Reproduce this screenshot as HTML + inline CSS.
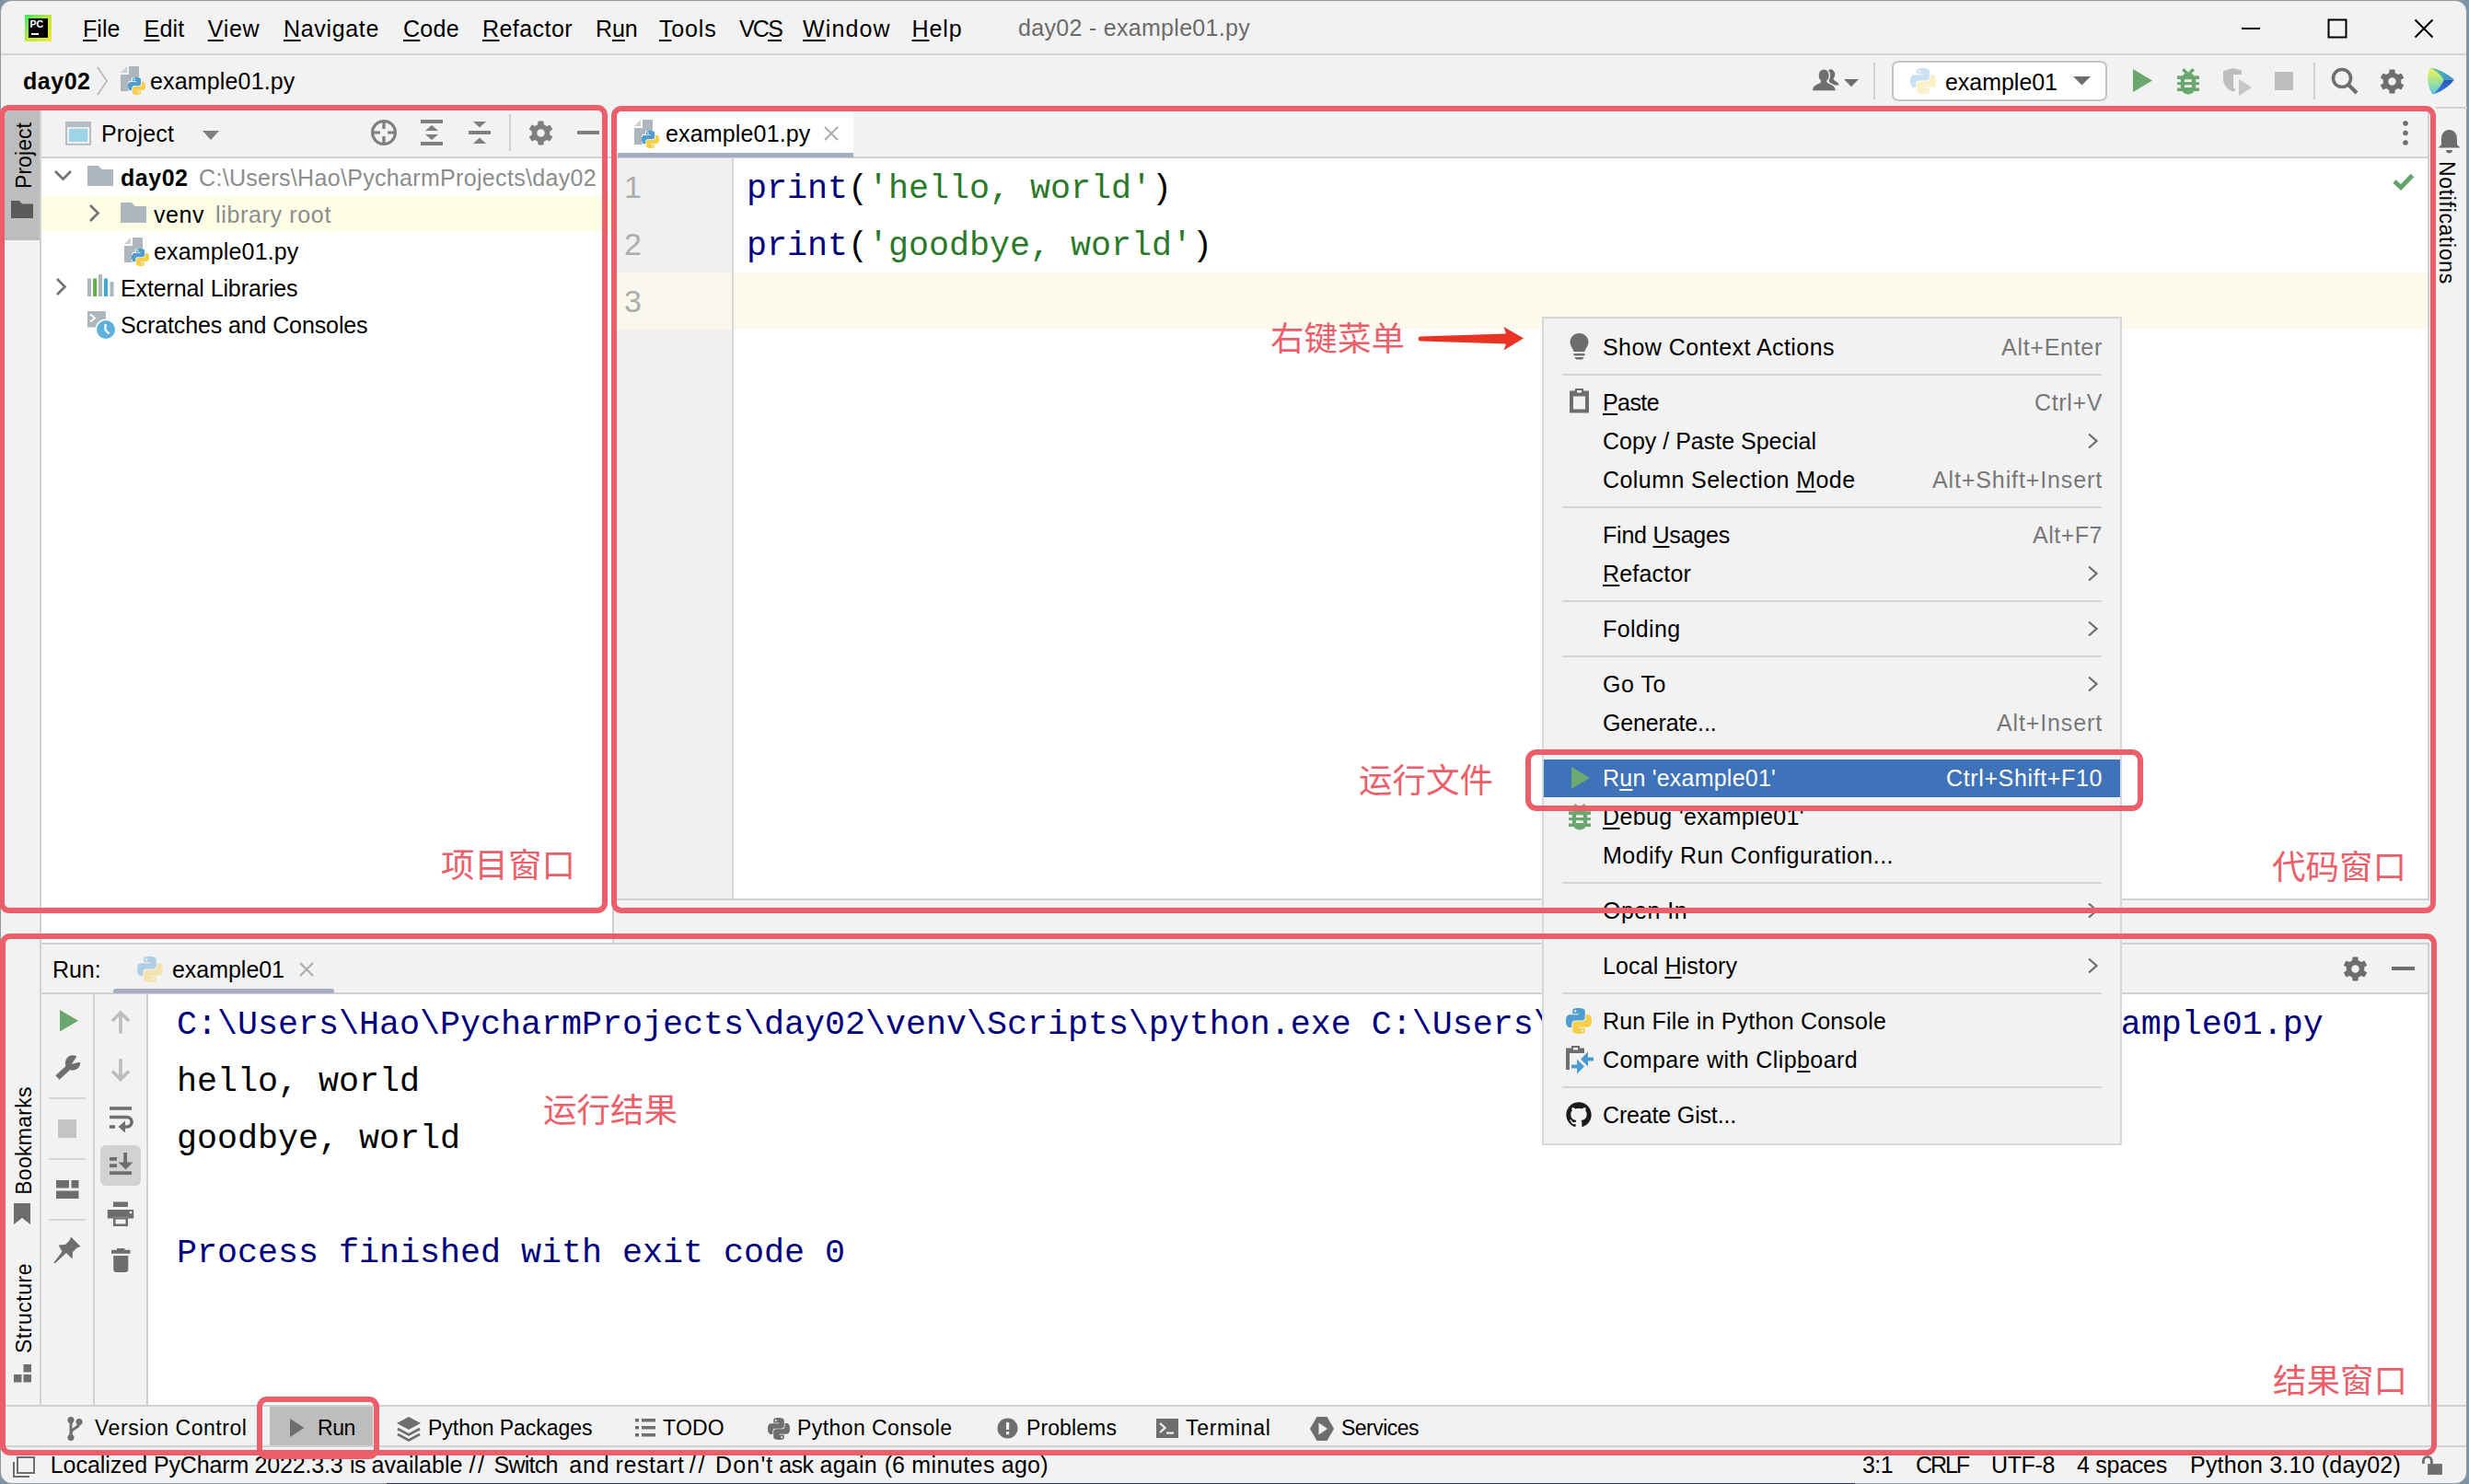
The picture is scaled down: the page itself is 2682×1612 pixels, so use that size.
<!DOCTYPE html>
<html lang="en"><head><meta charset="utf-8"><title>day02 - example01.py</title>
<style>
html,body{margin:0;padding:0;}
body{width:2682px;height:1612px;overflow:hidden;background:#7b93a7;position:relative;}
#app{position:absolute;left:0;top:0;width:2682px;height:1612px;overflow:hidden;}
#app div,#app span,#app svg{position:absolute;}
#app span{white-space:pre;}
#app u{text-decoration:underline;text-decoration-thickness:2px;text-underline-offset:3px;}
</style></head>
<body><div id="app">
<div style="left:1px;top:1px;width:2678.300px;height:1609.6px;background:#f2f2f2;border-radius:12px;box-shadow:0 0 0 1.5px #8c99a3;"></div>
<div style="left:1px;top:58px;width:2678px;height:2px;background:#d4d4d4;"></div>
<div style="left:2646px;top:116px;width:34px;height:2px;background:#d1d1d1;"></div>
<div style="left:27px;top:16px;width:29px;height:29px;background:linear-gradient(135deg,#3bea62 0%,#c9e637 55%,#f1eb42 100%);"></div>
<div style="left:31px;top:20px;width:21px;height:21px;background:#000;"></div>
<span style="left:32.500px;top:21px;font:700 10.500px/10.500px 'Liberation Sans', sans-serif;color:#fff;">PC</span>
<div style="left:33.5px;top:36px;width:8px;height:2px;background:#fff;"></div>
<span id="t1" style="top:18.8px;font:400 25px/25px 'Liberation Sans', sans-serif;color:#000;left:90px;letter-spacing:0.026px;"><u>F</u>ile</span>
<span id="t2" style="top:18.8px;font:400 25px/25px 'Liberation Sans', sans-serif;color:#000;left:156.5px;letter-spacing:0.202px;"><u>E</u>dit</span>
<span id="t3" style="top:18.8px;font:400 25px/25px 'Liberation Sans', sans-serif;color:#000;left:225.8px;letter-spacing:0.712px;"><u>V</u>iew</span>
<span id="t4" style="top:18.8px;font:400 25px/25px 'Liberation Sans', sans-serif;color:#000;left:308px;letter-spacing:0.664px;"><u>N</u>avigate</span>
<span id="t5" style="top:18.8px;font:400 25px/25px 'Liberation Sans', sans-serif;color:#000;left:438px;letter-spacing:0.305px;"><u>C</u>ode</span>
<span id="t6" style="top:18.8px;font:400 25px/25px 'Liberation Sans', sans-serif;color:#000;left:524px;letter-spacing:0.438px;"><u>R</u>efactor</span>
<span id="t7" style="top:18.8px;font:400 25px/25px 'Liberation Sans', sans-serif;color:#000;left:647px;letter-spacing:-0.092px;">R<u>u</u>n</span>
<span id="t8" style="top:18.8px;font:400 25px/25px 'Liberation Sans', sans-serif;color:#000;left:716px;letter-spacing:0.845px;"><u>T</u>ools</span>
<span id="t9" style="top:18.8px;font:400 25px/25px 'Liberation Sans', sans-serif;color:#000;left:803px;letter-spacing:-1.807px;">VC<u>S</u></span>
<span id="t10" style="top:18.8px;font:400 25px/25px 'Liberation Sans', sans-serif;color:#000;left:872px;letter-spacing:1.127px;"><u>W</u>indow</span>
<span id="t11" style="top:18.8px;font:400 25px/25px 'Liberation Sans', sans-serif;color:#000;left:990.4px;letter-spacing:0.966px;"><u>H</u>elp</span>
<span id="t12" style="top:18.3px;font:400 25px/25px 'Liberation Sans', sans-serif;color:#6b6b6b;left:1106px;letter-spacing:0.301px;">day02 - example01.py</span>
<svg style="left:2430px;top:20px;" width="30" height="22" viewBox="0 0 30 22"><rect x="5" y="10" width="20" height="2" fill="#000"/></svg>
<svg style="left:2526px;top:18px;" width="26" height="26" viewBox="0 0 26 26"><rect x="3.500" y="3.500" width="19" height="19" fill="none" stroke="#000" stroke-width="2"/></svg>
<svg style="left:2620px;top:18px;" width="26" height="26" viewBox="0 0 26 26"><path d="M3.500 3.500L22.500 22.500M22.500 3.500L3.500 22.500" stroke="#000" stroke-width="2" fill="none"/></svg>
<span id="t13" style="top:75.8px;font:700 25px/25px 'Liberation Sans', sans-serif;color:#000;left:25px;letter-spacing:0.522px;">day02</span>
<svg style="left:104px;top:72px;" width="16" height="32" viewBox="0 0 16 32"><path d="M2 1L12 16L2 31" fill="none" stroke="#b4b4b4" stroke-width="1.600"/></svg>
<svg style="left:131px;top:72px;" width="27" height="31" viewBox="0 0 27 31"><path fill="#aeb6bd" d="M9 0H20V16H13V27H0V9H9Z"/><path fill="#c9cfd4" d="M7 0V7H0Z"/></svg>
<svg style="left:139px;top:83.5px;" width="19" height="19" viewBox="0 0 24 24"><path fill="#fff" stroke="#fff" stroke-width="2.600" d="M14.25.18l.9.2.73.26.59.3.45.32.34.34.25.34.16.33.1.3.04.26.02.2-.01.13V8.5l-.05.63-.13.55-.21.46-.26.38-.3.31-.33.25-.35.19-.35.14-.33.1-.3.07-.26.04-.21.02H8.77l-.69.05-.59.14-.5.22-.41.27-.33.32-.27.35-.2.36-.15.37-.1.35-.07.32-.04.27-.02.21v3.06H3.17l-.21-.03-.28-.07-.32-.12-.35-.18-.36-.26-.36-.36-.35-.46-.32-.59-.28-.73-.21-.88-.14-1.05-.05-1.23.06-1.22.16-1.04.24-.87.32-.71.36-.57.4-.44.42-.33.42-.24.4-.16.36-.1.32-.05.24-.01h.16l.06.01h8.16v-.83H6.18l-.01-2.75-.02-.37.05-.34.11-.31.17-.28.25-.26.31-.23.38-.2.44-.18.51-.15.58-.12.64-.1.71-.06.77-.04.84-.02 1.27.05zM7.95 2.16l-.23.33-.08.41.08.41.23.34.33.22.41.09.41-.09.33-.22.23-.34.08-.41-.08-.41-.23-.33-.33-.22-.41-.09-.41.09z"/></svg>
<svg style="left:139px;top:83.5px;" width="19" height="19" viewBox="0 0 24 24"><g opacity="1"><path fill="#4f9dd0" d="M14.25.18l.9.2.73.26.59.3.45.32.34.34.25.34.16.33.1.3.04.26.02.2-.01.13V8.5l-.05.63-.13.55-.21.46-.26.38-.3.31-.33.25-.35.19-.35.14-.33.1-.3.07-.26.04-.21.02H8.77l-.69.05-.59.14-.5.22-.41.27-.33.32-.27.35-.2.36-.15.37-.1.35-.07.32-.04.27-.02.21v3.06H3.17l-.21-.03-.28-.07-.32-.12-.35-.18-.36-.26-.36-.36-.35-.46-.32-.59-.28-.73-.21-.88-.14-1.05-.05-1.23.06-1.22.16-1.04.24-.87.32-.71.36-.57.4-.44.42-.33.42-.24.4-.16.36-.1.32-.05.24-.01h.16l.06.01h8.16v-.83H6.18l-.01-2.75-.02-.37.05-.34.11-.31.17-.28.25-.26.31-.23.38-.2.44-.18.51-.15.58-.12.64-.1.71-.06.77-.04.84-.02 1.27.05zM7.95 2.16l-.23.33-.08.41.08.41.23.34.33.22.41.09.41-.09.33-.22.23-.34.08-.41-.08-.41-.23-.33-.33-.22-.41-.09-.41.09z"/><path fill="#f6cf4b" d="M21.04 6.11l.28.06.32.12.35.18.36.27.36.35.35.47.32.59.28.73.21.88.14 1.04.05 1.23-.06 1.23-.16 1.04-.24.86-.32.71-.36.57-.4.45-.42.33-.42.24-.4.16-.36.09-.32.05-.24.02-.16-.01h-8.22v.82h5.84l.01 2.76.02.36-.05.34-.11.31-.17.29-.25.25-.31.24-.38.2-.44.17-.51.15-.58.13-.64.09-.71.07-.77.04-.84.01-1.27-.04-1.07-.14-.9-.2-.73-.25-.59-.3-.45-.33-.34-.34-.25-.34-.16-.33-.1-.3-.04-.25-.02-.2.01-.13v-5.34l.05-.64.13-.54.21-.46.26-.38.3-.32.33-.24.35-.2.35-.14.33-.1.3-.06.26-.04.21-.02.13-.01h5.84l.69-.05.59-.14.5-.21.41-.28.33-.32.27-.35.2-.36.15-.36.1-.35.07-.32.04-.28.02-.21V6.07h2.09l.14.01zM14.57 20.36l-.23.33-.08.41.08.41.23.33.33.23.41.08.41-.08.33-.23.23-.33.08-.41-.08-.41-.23-.33-.33-.23-.41-.08-.41.08z"/></g></svg>
<span id="t14" style="top:75.8px;font:400 25px/25px 'Liberation Sans', sans-serif;color:#000;left:163px;letter-spacing:0.154px;">example01.py</span>
<svg style="left:1968px;top:70px;" width="31" height="30" viewBox="0 0 31 30"><g fill="#6e6e6e"><ellipse cx="20.600" cy="11" rx="4.600" ry="5.800"/><path d="M18 15L23.500 15.500C24 18.500 29.500 18.500 29.500 22.600H20Z"/></g><g fill="#f2f2f2" stroke="#f2f2f2" stroke-width="3"><ellipse cx="13.200" cy="12" rx="5.500" ry="6.600"/><path d="M1 28.600C1 22.500 6 22 9.800 19.800L10.400 16H16L16.600 19.800C20.500 22 25.700 22.500 25.700 28.600Z"/></g><g fill="#6e6e6e"><ellipse cx="13.200" cy="12" rx="5.500" ry="6.600"/><path d="M1 28.600C1 22.500 6 22 9.800 19.800L10.400 16H16L16.600 19.800C20.500 22 25.700 22.500 25.700 28.600Z"/></g><rect x="0" y="28.600" width="31" height="2" fill="#f2f2f2"/></svg>
<svg style="left:2003.0px;top:85.9px;" width="16" height="8.2" viewBox="0 0 16 8.2"><path fill="#6e6e6e" d="M0 0H16L8.0 8.2Z"/></svg>
<div style="left:2035px;top:68px;width:2px;height:40px;background:#d0d0d0;"></div>
<div style="left:2055px;top:65.800px;width:230px;height:40.100px;background:#fff;border:2px solid #c4c4c4;border-radius:7px;"></div>
<svg style="left:2075px;top:74px;" width="28" height="28" viewBox="0 0 24 24"><g opacity="0.3"><path fill="#4f9dd0" d="M14.25.18l.9.2.73.26.59.3.45.32.34.34.25.34.16.33.1.3.04.26.02.2-.01.13V8.5l-.05.63-.13.55-.21.46-.26.38-.3.31-.33.25-.35.19-.35.14-.33.1-.3.07-.26.04-.21.02H8.77l-.69.05-.59.14-.5.22-.41.27-.33.32-.27.35-.2.36-.15.37-.1.35-.07.32-.04.27-.02.21v3.06H3.17l-.21-.03-.28-.07-.32-.12-.35-.18-.36-.26-.36-.36-.35-.46-.32-.59-.28-.73-.21-.88-.14-1.05-.05-1.23.06-1.22.16-1.04.24-.87.32-.71.36-.57.4-.44.42-.33.42-.24.4-.16.36-.1.32-.05.24-.01h.16l.06.01h8.16v-.83H6.18l-.01-2.75-.02-.37.05-.34.11-.31.17-.28.25-.26.31-.23.38-.2.44-.18.51-.15.58-.12.64-.1.71-.06.77-.04.84-.02 1.27.05zM7.95 2.16l-.23.33-.08.41.08.41.23.34.33.22.41.09.41-.09.33-.22.23-.34.08-.41-.08-.41-.23-.33-.33-.22-.41-.09-.41.09z"/><path fill="#f6cf4b" d="M21.04 6.11l.28.06.32.12.35.18.36.27.36.35.35.47.32.59.28.73.21.88.14 1.04.05 1.23-.06 1.23-.16 1.04-.24.86-.32.71-.36.57-.4.45-.42.33-.42.24-.4.16-.36.09-.32.05-.24.02-.16-.01h-8.22v.82h5.84l.01 2.76.02.36-.05.34-.11.31-.17.29-.25.25-.31.24-.38.2-.44.17-.51.15-.58.13-.64.09-.71.07-.77.04-.84.01-1.27-.04-1.07-.14-.9-.2-.73-.25-.59-.3-.45-.33-.34-.34-.25-.34-.16-.33-.1-.3-.04-.25-.02-.2.01-.13v-5.34l.05-.64.13-.54.21-.46.26-.38.3-.32.33-.24.35-.2.35-.14.33-.1.3-.06.26-.04.21-.02.13-.01h5.84l.69-.05.59-.14.5-.21.41-.28.33-.32.27-.35.2-.36.15-.36.1-.35.07-.32.04-.28.02-.21V6.07h2.09l.14.01zM14.57 20.36l-.23.33-.08.41.08.41.23.33.33.23.41.08.41-.08.33-.23.23-.33.08-.41-.08-.41-.23-.33-.33-.23-.41-.08-.41.08z"/></g></svg>
<span id="t15" style="top:76.8px;font:400 25px/25px 'Liberation Sans', sans-serif;color:#000;left:2113px;letter-spacing:-0.035px;">example01</span>
<svg style="left:2251.5px;top:83.25px;" width="19" height="9.5" viewBox="0 0 19 9.5"><path fill="#6e6e6e" d="M0 0H19L9.5 9.5Z"/></svg>
<svg style="left:2317px;top:75px;" width="21" height="25" viewBox="0 0 21 25"><path fill="#6aa76e" d="M0 0L21 12.5L0 25Z"/></svg>
<svg style="left:2365.0px;top:73.8px;" width="24.0" height="29.0" viewBox="0 0 24 29"><g fill="#6aa76e"><path d="M3.8 14C3.8 8 7.500 5.500 12 5.500S20.200 8 20.200 14V19.500C20.200 25 16.500 28.400 12 28.400S3.800 25 3.800 19.500Z"/>
<path d="M6.200 1.200L11.500 6.500M17.800 1.200L12.500 6.500" stroke="#6aa76e" stroke-width="3.400" fill="none"/>
<rect x="0" y="8.300" width="5" height="3.800"/><rect x="19" y="8.300" width="5" height="3.800"/>
<rect x="0" y="15.200" width="5" height="2.900"/><rect x="19" y="15.200" width="5" height="2.900"/>
<rect x="0" y="21.500" width="5" height="3.500"/><rect x="19" y="21.500" width="5" height="3.500"/></g>
<rect x="8" y="12.300" width="7.800" height="2.700" fill="#f2f2f2"/><rect x="8" y="18.300" width="7.800" height="2.700" fill="#f2f2f2"/></svg>
<svg style="left:2413px;top:73px;" width="34" height="32" viewBox="0 0 34 32"><path fill="#bdbdbd" d="M2 4L13 1L22 3.500V8H13V22.500L16 24.500L12.500 26.500C6 24 2 19 2 12Z"/><path fill="#c6c6c6" d="M19 13L33 22L19 31Z"/></svg>
<div style="left:2471px;top:78px;width:20px;height:20px;background:#bdbdbd;"></div>
<div style="left:2513px;top:68px;width:2px;height:40px;background:#d0d0d0;"></div>
<svg style="left:2531px;top:72px;" width="32" height="32" viewBox="0 0 32 32"><circle cx="13" cy="13" r="9.500" fill="none" stroke="#6e6e6e" stroke-width="3.600"/><path d="M20 20L29 29" stroke="#6e6e6e" stroke-width="4" /></svg>
<svg style="left:2584.0px;top:73.5px;" width="29" height="29" viewBox="0 0 29 29"><path fill="#6e6e6e" fill-rule="evenodd" stroke="#6e6e6e" stroke-width="1.5" stroke-linejoin="round" d="M11.99 5.60 L12.18 2.22 L16.82 2.22 L17.01 5.60 L20.95 7.87 L23.98 6.35 L26.30 10.37 L23.47 12.22 L23.47 16.78 L26.30 18.63 L23.98 22.65 L20.95 21.13 L17.01 23.40 L16.82 26.78 L12.18 26.78 L11.99 23.40 L8.05 21.13 L5.02 22.65 L2.70 18.63 L5.53 16.78 L5.53 12.22 L2.70 10.37 L5.02 6.35 L8.05 7.87Z M19.50 14.50 A5.0 5.0 0 1 0 9.50 14.50 A5.0 5.0 0 1 0 19.50 14.50Z"/></svg>
<div style="left:2636.500px;top:73.300px;width:30px;height:30px;background:linear-gradient(180deg,#f6f25a 5%,#a6e38f 50%,#5cc8e2 95%);clip-path:polygon(10.0% 2.7%,4.0% 20.0%,2.0% 40.0%,4.0% 60.0%,10.0% 80.0%,18.7% 97.3%,31.7% 86.7%,45.0% 71.7%,55.0% 56.7%,60.0% 45.3%,50.0% 30.0%,35.0% 16.0%,21.7% 7.3%);"></div>
<div style="left:2636.500px;top:73.300px;width:30px;height:30px;background:linear-gradient(100deg,#4fd37c 5%,#45a8c0 55%,#3c86e0 100%);clip-path:polygon(10.0% 2.7%,30.0% 4.7%,50.0% 12.0%,70.0% 23.3%,86.7% 35.0%,98.0% 44.0%,60.0% 45.3%,50.0% 30.0%,35.0% 16.0%,21.7% 7.3%);"></div>
<div style="left:2636.500px;top:73.300px;width:30px;height:30px;background:linear-gradient(200deg,#2546a8 20%,#2f6fd0 70%,#3b95e0 100%);clip-path:polygon(98.0% 44.0%,86.7% 58.3%,70.0% 72.7%,50.0% 85.3%,33.3% 93.3%,18.7% 97.3%,31.7% 86.7%,45.0% 71.7%,55.0% 56.7%,60.0% 45.3%);"></div>
<div style="left:5px;top:120px;width:38px;height:141px;background:#bdbdbd;"></div>
<div style="left:43px;top:120px;width:2px;height:904px;background:#d1d1d1;"></div>
<span id="t16" style="left:25.5px;top:168.5px;font:400 23px/23px 'Liberation Sans', sans-serif;color:#000;transform:translate(-50%,-50%) rotate(-90deg);letter-spacing:0.058px;">Project</span>
<svg style="left:12px;top:218px;" width="24" height="19" viewBox="0 0 24 19"><path fill="#5a5a5a" d="M0 0H9L12 3.500H24V19H0Z"/></svg>
<div style="left:45px;top:120px;width:621px;height:50px;background:#f2f2f2;"></div>
<div style="left:45px;top:170px;width:621px;height:2px;background:#d1d1d1;"></div>
<div style="left:45px;top:172px;width:621px;height:852px;background:#fff;"></div>
<div style="left:665px;top:172px;width:2px;height:852px;background:#d1d1d1;"></div>
<svg style="left:71px;top:132px;" width="28" height="26" viewBox="0 0 28 26"><rect width="28" height="25.800" fill="#b5bcc3"/><rect x="2" y="6.200" width="24" height="17.600" fill="#f6f6f6"/><rect x="3.700" y="7.800" width="20.600" height="14.200" fill="#9fd3e8"/></svg>
<span id="t17" style="top:133.3px;font:400 25px/25px 'Liberation Sans', sans-serif;color:#000;left:110px;letter-spacing:0.170px;">Project</span>
<svg style="left:220.0px;top:142.0px;" width="18" height="10" viewBox="0 0 18 10"><path fill="#7f7f7f" d="M0 0H18L9.0 10Z"/></svg>
<svg style="left:401px;top:128px;" width="32" height="32" viewBox="0 0 32 32"><g fill="none" stroke="#7f7f7f" stroke-width="3.200"><circle cx="16" cy="16" r="12.400"/><path d="M16 4V12M16 20V28M4 16H12M20 16H28"/></g></svg>
<svg style="left:456px;top:129px;" width="26" height="30" viewBox="0 0 26 30"><g fill="#7f7f7f"><rect x="1" y="1" width="24" height="4"/><rect x="1" y="25" width="24" height="4"/><path d="M6 13H20L13 7Z"/><path d="M6 17H20L13 23Z"/></g></svg>
<svg style="left:508px;top:129px;" width="26" height="30" viewBox="0 0 26 30"><g fill="#7f7f7f"><rect x="1" y="13" width="24" height="4"/><path d="M6 3H20L13 9.500Z"/><path d="M6 27H20L13 20.500Z"/></g></svg>
<div style="left:553px;top:124px;width:2px;height:40px;background:#d0d0d0;"></div>
<svg style="left:572.5px;top:129.5px;" width="29" height="29" viewBox="0 0 29 29"><path fill="#7f7f7f" fill-rule="evenodd" stroke="#7f7f7f" stroke-width="1.5" stroke-linejoin="round" d="M11.99 5.60 L12.18 2.22 L16.82 2.22 L17.01 5.60 L20.95 7.87 L23.98 6.35 L26.30 10.37 L23.47 12.22 L23.47 16.78 L26.30 18.63 L23.98 22.65 L20.95 21.13 L17.01 23.40 L16.82 26.78 L12.18 26.78 L11.99 23.40 L8.05 21.13 L5.02 22.65 L2.70 18.63 L5.53 16.78 L5.53 12.22 L2.70 10.37 L5.02 6.35 L8.05 7.87Z M19.50 14.50 A5.0 5.0 0 1 0 9.50 14.50 A5.0 5.0 0 1 0 19.50 14.50Z"/></svg>
<div style="left:627px;top:142px;width:24px;height:4px;background:#7f7f7f;"></div>
<div style="left:45px;top:212px;width:620px;height:40px;background:#fefee6;"></div>
<svg style="left:57.5px;top:183.75px;" width="21" height="13.5" viewBox="0 0 21 13.5"><path fill="none" stroke="#737373" stroke-width="2.7" d="M2 2L10.5 10.5L19 2"/></svg>
<svg style="left:95px;top:180px;" width="28" height="22" viewBox="0 0 28 22"><path fill="#afb7be" d="M0 0H11.8L15.8 4H28V22H0Z"/></svg>
<span id="t18" style="top:180.8px;font:700 25px/25px 'Liberation Sans', sans-serif;color:#000;left:131px;letter-spacing:0.522px;">day02</span>
<span id="t19" style="top:180.8px;font:400 25px/25px 'Liberation Sans', sans-serif;color:#8c8c8c;left:216px;letter-spacing:0.324px;">C:\Users\Hao\PycharmProjects\day02</span>
<svg style="left:96.25px;top:220.5px;" width="13.5" height="21" viewBox="0 0 13.5 21"><path fill="none" stroke="#737373" stroke-width="2.7" d="M2 2L10.5 10.5L2 19"/></svg>
<svg style="left:131px;top:220px;" width="28" height="22" viewBox="0 0 28 22"><path fill="#afb7be" d="M0 0H11.8L15.8 4H28V22H0Z"/></svg>
<span id="t20" style="top:220.8px;font:400 25px/25px 'Liberation Sans', sans-serif;color:#000;left:167px;letter-spacing:0.547px;">venv</span>
<span id="t21" style="top:220.8px;font:400 25px/25px 'Liberation Sans', sans-serif;color:#8c8c8c;left:234px;letter-spacing:0.659px;">library root</span>
<svg style="left:135px;top:258px;" width="27" height="31" viewBox="0 0 27 31"><path fill="#aeb6bd" d="M9 0H20V16H13V27H0V9H9Z"/><path fill="#c9cfd4" d="M7 0V7H0Z"/></svg>
<svg style="left:143px;top:269.5px;" width="19" height="19" viewBox="0 0 24 24"><path fill="#fff" stroke="#fff" stroke-width="2.600" d="M14.25.18l.9.2.73.26.59.3.45.32.34.34.25.34.16.33.1.3.04.26.02.2-.01.13V8.5l-.05.63-.13.55-.21.46-.26.38-.3.31-.33.25-.35.19-.35.14-.33.1-.3.07-.26.04-.21.02H8.77l-.69.05-.59.14-.5.22-.41.27-.33.32-.27.35-.2.36-.15.37-.1.35-.07.32-.04.27-.02.21v3.06H3.17l-.21-.03-.28-.07-.32-.12-.35-.18-.36-.26-.36-.36-.35-.46-.32-.59-.28-.73-.21-.88-.14-1.05-.05-1.23.06-1.22.16-1.04.24-.87.32-.71.36-.57.4-.44.42-.33.42-.24.4-.16.36-.1.32-.05.24-.01h.16l.06.01h8.16v-.83H6.18l-.01-2.75-.02-.37.05-.34.11-.31.17-.28.25-.26.31-.23.38-.2.44-.18.51-.15.58-.12.64-.1.71-.06.77-.04.84-.02 1.27.05zM7.95 2.16l-.23.33-.08.41.08.41.23.34.33.22.41.09.41-.09.33-.22.23-.34.08-.41-.08-.41-.23-.33-.33-.22-.41-.09-.41.09z"/></svg>
<svg style="left:143px;top:269.5px;" width="19" height="19" viewBox="0 0 24 24"><g opacity="1"><path fill="#4f9dd0" d="M14.25.18l.9.2.73.26.59.3.45.32.34.34.25.34.16.33.1.3.04.26.02.2-.01.13V8.5l-.05.63-.13.55-.21.46-.26.38-.3.31-.33.25-.35.19-.35.14-.33.1-.3.07-.26.04-.21.02H8.77l-.69.05-.59.14-.5.22-.41.27-.33.32-.27.35-.2.36-.15.37-.1.35-.07.32-.04.27-.02.21v3.06H3.17l-.21-.03-.28-.07-.32-.12-.35-.18-.36-.26-.36-.36-.35-.46-.32-.59-.28-.73-.21-.88-.14-1.05-.05-1.23.06-1.22.16-1.04.24-.87.32-.71.36-.57.4-.44.42-.33.42-.24.4-.16.36-.1.32-.05.24-.01h.16l.06.01h8.16v-.83H6.18l-.01-2.75-.02-.37.05-.34.11-.31.17-.28.25-.26.31-.23.38-.2.44-.18.51-.15.58-.12.64-.1.71-.06.77-.04.84-.02 1.27.05zM7.95 2.16l-.23.33-.08.41.08.41.23.34.33.22.41.09.41-.09.33-.22.23-.34.08-.41-.08-.41-.23-.33-.33-.22-.41-.09-.41.09z"/><path fill="#f6cf4b" d="M21.04 6.11l.28.06.32.12.35.18.36.27.36.35.35.47.32.59.28.73.21.88.14 1.04.05 1.23-.06 1.23-.16 1.04-.24.86-.32.71-.36.57-.4.45-.42.33-.42.24-.4.16-.36.09-.32.05-.24.02-.16-.01h-8.22v.82h5.84l.01 2.76.02.36-.05.34-.11.31-.17.29-.25.25-.31.24-.38.2-.44.17-.51.15-.58.13-.64.09-.71.07-.77.04-.84.01-1.27-.04-1.07-.14-.9-.2-.73-.25-.59-.3-.45-.33-.34-.34-.25-.34-.16-.33-.1-.3-.04-.25-.02-.2.01-.13v-5.34l.05-.64.13-.54.21-.46.26-.38.3-.32.33-.24.35-.2.35-.14.33-.1.3-.06.26-.04.21-.02.13-.01h5.84l.69-.05.59-.14.5-.21.41-.28.33-.32.27-.35.2-.36.15-.36.1-.35.07-.32.04-.28.02-.21V6.07h2.09l.14.01zM14.57 20.36l-.23.33-.08.41.08.41.23.33.33.23.41.08.41-.08.33-.23.23-.33.08-.41-.08-.41-.23-.33-.33-.23-.41-.08-.41.08z"/></g></svg>
<span id="t22" style="top:260.8px;font:400 25px/25px 'Liberation Sans', sans-serif;color:#000;left:167px;letter-spacing:0.154px;">example01.py</span>
<svg style="left:60.25px;top:300.5px;" width="13.5" height="21" viewBox="0 0 13.5 21"><path fill="none" stroke="#737373" stroke-width="2.7" d="M2 2L10.5 10.5L2 19"/></svg>
<svg style="left:95px;top:298px;" width="29" height="24" viewBox="0 0 29 24"><g fill="#aeb6bd"><rect x="0" y="4.500" width="4" height="19.500"/><rect x="12" y="0" width="4" height="24"/><rect x="24.500" y="8" width="4" height="16"/></g><rect x="6" y="4.500" width="4" height="19.500" fill="#62b543"/><rect x="18" y="4.500" width="4" height="19.500" fill="#40a9dc"/></svg>
<span id="t23" style="top:300.8px;font:400 25px/25px 'Liberation Sans', sans-serif;color:#000;left:131px;letter-spacing:-0.113px;">External Libraries</span>
<svg style="left:95px;top:338px;" width="31" height="31" viewBox="0 0 31 31"><rect x="0" y="0" width="20" height="17.500" fill="#aeb6bd"/><path d="M3 3.500L8 7.500L3 11.500" fill="none" stroke="#fff" stroke-width="1.800"/><circle cx="20" cy="20" r="11.500" fill="#fff"/><circle cx="20" cy="20" r="10" fill="#5cb2dc"/><path d="M19.500 14V20.500L23.500 24.500" fill="none" stroke="#fff" stroke-width="2.200"/></svg>
<span id="t24" style="top:340.8px;font:400 25px/25px 'Liberation Sans', sans-serif;color:#000;left:131px;letter-spacing:-0.113px;">Scratches and Consoles</span>
<div style="left:667px;top:120px;width:1972px;height:50px;background:#f2f2f2;"></div>
<div style="left:667px;top:170px;width:1972px;height:2px;background:#d1d1d1;"></div>
<div style="left:671px;top:121px;width:256px;height:46px;background:#fff;"></div>
<div style="left:671px;top:166px;width:256px;height:5px;background:#a5adc1;"></div>
<svg style="left:689px;top:130px;" width="27" height="31" viewBox="0 0 27 31"><path fill="#aeb6bd" d="M9 0H20V16H13V27H0V9H9Z"/><path fill="#c9cfd4" d="M7 0V7H0Z"/></svg>
<svg style="left:697px;top:141.5px;" width="19" height="19" viewBox="0 0 24 24"><path fill="#fff" stroke="#fff" stroke-width="2.600" d="M14.25.18l.9.2.73.26.59.3.45.32.34.34.25.34.16.33.1.3.04.26.02.2-.01.13V8.5l-.05.63-.13.55-.21.46-.26.38-.3.31-.33.25-.35.19-.35.14-.33.1-.3.07-.26.04-.21.02H8.77l-.69.05-.59.14-.5.22-.41.27-.33.32-.27.35-.2.36-.15.37-.1.35-.07.32-.04.27-.02.21v3.06H3.17l-.21-.03-.28-.07-.32-.12-.35-.18-.36-.26-.36-.36-.35-.46-.32-.59-.28-.73-.21-.88-.14-1.05-.05-1.23.06-1.22.16-1.04.24-.87.32-.71.36-.57.4-.44.42-.33.42-.24.4-.16.36-.1.32-.05.24-.01h.16l.06.01h8.16v-.83H6.18l-.01-2.75-.02-.37.05-.34.11-.31.17-.28.25-.26.31-.23.38-.2.44-.18.51-.15.58-.12.64-.1.71-.06.77-.04.84-.02 1.27.05zM7.95 2.16l-.23.33-.08.41.08.41.23.34.33.22.41.09.41-.09.33-.22.23-.34.08-.41-.08-.41-.23-.33-.33-.22-.41-.09-.41.09z"/></svg>
<svg style="left:697px;top:141.5px;" width="19" height="19" viewBox="0 0 24 24"><g opacity="1"><path fill="#4f9dd0" d="M14.25.18l.9.2.73.26.59.3.45.32.34.34.25.34.16.33.1.3.04.26.02.2-.01.13V8.5l-.05.63-.13.55-.21.46-.26.38-.3.31-.33.25-.35.19-.35.14-.33.1-.3.07-.26.04-.21.02H8.77l-.69.05-.59.14-.5.22-.41.27-.33.32-.27.35-.2.36-.15.37-.1.35-.07.32-.04.27-.02.21v3.06H3.17l-.21-.03-.28-.07-.32-.12-.35-.18-.36-.26-.36-.36-.35-.46-.32-.59-.28-.73-.21-.88-.14-1.05-.05-1.23.06-1.22.16-1.04.24-.87.32-.71.36-.57.4-.44.42-.33.42-.24.4-.16.36-.1.32-.05.24-.01h.16l.06.01h8.16v-.83H6.18l-.01-2.75-.02-.37.05-.34.11-.31.17-.28.25-.26.31-.23.38-.2.44-.18.51-.15.58-.12.64-.1.71-.06.77-.04.84-.02 1.27.05zM7.95 2.16l-.23.33-.08.41.08.41.23.34.33.22.41.09.41-.09.33-.22.23-.34.08-.41-.08-.41-.23-.33-.33-.22-.41-.09-.41.09z"/><path fill="#f6cf4b" d="M21.04 6.11l.28.06.32.12.35.18.36.27.36.35.35.47.32.59.28.73.21.88.14 1.04.05 1.23-.06 1.23-.16 1.04-.24.86-.32.71-.36.57-.4.45-.42.33-.42.24-.4.16-.36.09-.32.05-.24.02-.16-.01h-8.22v.82h5.84l.01 2.76.02.36-.05.34-.11.31-.17.29-.25.25-.31.24-.38.2-.44.17-.51.15-.58.13-.64.09-.71.07-.77.04-.84.01-1.27-.04-1.07-.14-.9-.2-.73-.25-.59-.3-.45-.33-.34-.34-.25-.34-.16-.33-.1-.3-.04-.25-.02-.2.01-.13v-5.34l.05-.64.13-.54.21-.46.26-.38.3-.32.33-.24.35-.2.35-.14.33-.1.3-.06.26-.04.21-.02.13-.01h5.84l.69-.05.59-.14.5-.21.41-.28.33-.32.27-.35.2-.36.15-.36.1-.35.07-.32.04-.28.02-.21V6.07h2.09l.14.01zM14.57 20.36l-.23.33-.08.41.08.41.23.33.33.23.41.08.41-.08.33-.23.23-.33.08-.41-.08-.41-.23-.33-.33-.23-.41-.08-.41.08z"/></g></svg>
<span id="t25" style="top:132.8px;font:400 25px/25px 'Liberation Sans', sans-serif;color:#000;left:723px;letter-spacing:0.154px;">example01.py</span>
<svg style="left:894px;top:136px;" width="18" height="18" viewBox="0 0 18 18"><path d="M2 2L16 16M16 2L2 16" stroke="#a9a9a9" stroke-width="1.800" fill="none"/></svg>
<svg style="left:2609px;top:130px;" width="8" height="30" viewBox="0 0 8 30"><g fill="#6e6e6e"><circle cx="4" cy="4" r="2.800"/><circle cx="4" cy="14.500" r="2.800"/><circle cx="4" cy="25" r="2.800"/></g></svg>
<div style="left:667px;top:172px;width:128px;height:805px;background:#f0f0f0;"></div>
<div style="left:795px;top:172px;width:1843px;height:805px;background:#fff;"></div>
<div style="left:794.5px;top:172px;width:2px;height:805px;background:#d6d6d6;"></div>
<div style="left:667px;top:296px;width:128px;height:62px;background:#faf8ec;"></div>
<div style="left:797px;top:296px;width:1841px;height:62px;background:#fcfaed;"></div>
<div style="left:2637px;top:120px;width:2px;height:857px;background:#d1d1d1;"></div>
<div style="left:667px;top:976px;width:1972px;height:2px;background:#d1d1d1;"></div>
<div style="left:667px;top:978px;width:1972px;height:46px;background:#f2f2f2;"></div>
<span id="t26" style="top:186.2px;font:400 34px/34px 'Liberation Sans', sans-serif;color:#adadad;left:678px;letter-spacing:0.078px;">1</span>
<span id="t27" style="top:248.2px;font:400 34px/34px 'Liberation Sans', sans-serif;color:#adadad;left:678px;letter-spacing:0.078px;">2</span>
<span id="t28" style="top:310.2px;font:400 34px/34px 'Liberation Sans', sans-serif;color:#adadad;left:678px;letter-spacing:0.078px;">3</span>
<span id="t29" style="top:186.9px;font:400 36.67px/36.67px 'Liberation Mono', monospace;color:#000080;left:811px;">print</span>
<span id="t30" style="top:186.9px;font:400 36.67px/36.67px 'Liberation Mono', monospace;color:#000;left:921px;">(</span>
<span id="t31" style="top:186.9px;font:400 36.67px/36.67px 'Liberation Mono', monospace;color:#2a7a2a;left:943px;">'hello, world'</span>
<span id="t32" style="top:186.9px;font:400 36.67px/36.67px 'Liberation Mono', monospace;color:#000;left:1251px;">)</span>
<span id="t33" style="top:248.9px;font:400 36.67px/36.67px 'Liberation Mono', monospace;color:#000080;left:811px;">print</span>
<span id="t34" style="top:248.9px;font:400 36.67px/36.67px 'Liberation Mono', monospace;color:#000;left:921px;">(</span>
<span id="t35" style="top:248.9px;font:400 36.67px/36.67px 'Liberation Mono', monospace;color:#2a7a2a;left:943px;">'goodbye, world'</span>
<span id="t36" style="top:248.9px;font:400 36.67px/36.67px 'Liberation Mono', monospace;color:#000;left:1295px;">)</span>
<svg style="left:2598px;top:187px;" width="26" height="21" viewBox="0 0 26 21"><path d="M3 10L10 16.500L22.500 3.500" fill="none" stroke="#62a56a" stroke-width="5"/></svg>
<svg style="left:2647px;top:140px;" width="27" height="28" viewBox="0 0 27 28"><path fill="#6e6e6e" d="M13.500 1C19 1 22 5.500 22 11V17L25.500 20.500H1.500L5 17V11C5 5.500 8 1 13.500 1Z"/><path fill="#6e6e6e" d="M10 23H17C17 25 15.500 26.500 13.500 26.500S10 25 10 23Z"/></svg>
<span id="t37" style="left:2657px;top:242px;font:400 23px/23px 'Liberation Sans', sans-serif;color:#000;transform:translate(-50%,-50%) rotate(90deg);letter-spacing:0.671px;">Notifications</span>
<div style="left:45px;top:1024px;width:2594px;height:2px;background:#d1d1d1;"></div>
<div style="left:45px;top:1026px;width:2594px;height:52px;background:#f2f2f2;"></div>
<div style="left:45px;top:1078px;width:2594px;height:2px;background:#d1d1d1;"></div>
<div style="left:43px;top:1024px;width:2px;height:503px;background:#d1d1d1;"></div>
<span id="t38" style="top:1040.8px;font:400 25px/25px 'Liberation Sans', sans-serif;color:#000;left:57px;letter-spacing:-0.078px;">Run:</span>
<svg style="left:149px;top:1039px;" width="28" height="28" viewBox="0 0 24 24"><g opacity="0.4"><path fill="#4f9dd0" d="M14.25.18l.9.2.73.26.59.3.45.32.34.34.25.34.16.33.1.3.04.26.02.2-.01.13V8.5l-.05.63-.13.55-.21.46-.26.38-.3.31-.33.25-.35.19-.35.14-.33.1-.3.07-.26.04-.21.02H8.77l-.69.05-.59.14-.5.22-.41.27-.33.32-.27.35-.2.36-.15.37-.1.35-.07.32-.04.27-.02.21v3.06H3.17l-.21-.03-.28-.07-.32-.12-.35-.18-.36-.26-.36-.36-.35-.46-.32-.59-.28-.73-.21-.88-.14-1.05-.05-1.23.06-1.22.16-1.04.24-.87.32-.71.36-.57.4-.44.42-.33.42-.24.4-.16.36-.1.32-.05.24-.01h.16l.06.01h8.16v-.83H6.18l-.01-2.75-.02-.37.05-.34.11-.31.17-.28.25-.26.31-.23.38-.2.44-.18.51-.15.58-.12.64-.1.71-.06.77-.04.84-.02 1.27.05zM7.95 2.16l-.23.33-.08.41.08.41.23.34.33.22.41.09.41-.09.33-.22.23-.34.08-.41-.08-.41-.23-.33-.33-.22-.41-.09-.41.09z"/><path fill="#f6cf4b" d="M21.04 6.11l.28.06.32.12.35.18.36.27.36.35.35.47.32.59.28.73.21.88.14 1.04.05 1.23-.06 1.23-.16 1.04-.24.86-.32.71-.36.57-.4.45-.42.33-.42.24-.4.16-.36.09-.32.05-.24.02-.16-.01h-8.22v.82h5.84l.01 2.76.02.36-.05.34-.11.31-.17.29-.25.25-.31.24-.38.2-.44.17-.51.15-.58.13-.64.09-.71.07-.77.04-.84.01-1.27-.04-1.07-.14-.9-.2-.73-.25-.59-.3-.45-.33-.34-.34-.25-.34-.16-.33-.1-.3-.04-.25-.02-.2.01-.13v-5.34l.05-.64.13-.54.21-.46.26-.38.3-.32.33-.24.35-.2.35-.14.33-.1.3-.06.26-.04.21-.02.13-.01h5.84l.69-.05.59-.14.5-.21.41-.28.33-.32.27-.35.2-.36.15-.36.1-.35.07-.32.04-.28.02-.21V6.07h2.09l.14.01zM14.57 20.36l-.23.33-.08.41.08.41.23.33.33.23.41.08.41-.08.33-.23.23-.33.08-.41-.08-.41-.23-.33-.33-.23-.41-.08-.41.08z"/></g></svg>
<span id="t39" style="top:1040.8px;font:400 25px/25px 'Liberation Sans', sans-serif;color:#000;left:187px;letter-spacing:-0.035px;">example01</span>
<svg style="left:324px;top:1044px;" width="18" height="18" viewBox="0 0 18 18"><path d="M2 2L16 16M16 2L2 16" stroke="#a9a9a9" stroke-width="1.800" fill="none"/></svg>
<div style="left:123px;top:1074px;width:240px;height:5px;background:#a5adc1;border-radius:3px;"></div>
<svg style="left:2544.0px;top:1037.5px;" width="29" height="29" viewBox="0 0 29 29"><path fill="#6e6e6e" fill-rule="evenodd" stroke="#6e6e6e" stroke-width="1.5" stroke-linejoin="round" d="M11.99 5.60 L12.18 2.22 L16.82 2.22 L17.01 5.60 L20.95 7.87 L23.98 6.35 L26.30 10.37 L23.47 12.22 L23.47 16.78 L26.30 18.63 L23.98 22.65 L20.95 21.13 L17.01 23.40 L16.82 26.78 L12.18 26.78 L11.99 23.40 L8.05 21.13 L5.02 22.65 L2.70 18.63 L5.53 16.78 L5.53 12.22 L2.70 10.37 L5.02 6.35 L8.05 7.87Z M19.50 14.50 A5.0 5.0 0 1 0 9.50 14.50 A5.0 5.0 0 1 0 19.50 14.50Z"/></svg>
<div style="left:2598px;top:1050px;width:25px;height:4px;background:#6e6e6e;"></div>
<div style="left:45px;top:1080px;width:115px;height:447px;background:#f2f2f2;"></div>
<div style="left:101px;top:1080px;width:2px;height:447px;background:#d1d1d1;"></div>
<div style="left:159px;top:1080px;width:2px;height:447px;background:#d1d1d1;"></div>
<div style="left:161px;top:1080px;width:2478px;height:447px;background:#fff;"></div>
<div style="left:2637px;top:1024px;width:2px;height:503px;background:#d1d1d1;"></div>
<svg style="left:65px;top:1096.5px;" width="20" height="23.5" viewBox="0 0 20 23.5"><path fill="#6aa76e" d="M0 0L20 11.75L0 23.5Z"/></svg>
<svg style="left:59px;top:1145px;" width="30" height="30" viewBox="0 0 30 30"><path d="M3.500 25.500L17 13" stroke="#6e6e6e" stroke-width="6.200" fill="none"/><circle cx="20" cy="9.500" r="8.200" fill="#6e6e6e"/><path d="M20 9.500L26.500 -1L34 8Z" fill="#f2f2f2"/><path d="M18.500 11L25 3.500L29.500 8Z" fill="#f2f2f2"/></svg>
<div style="left:53px;top:1192px;width:40px;height:2px;background:#d4d4d4;"></div>
<div style="left:63px;top:1216px;width:20px;height:20px;background:#c4c4c4;"></div>
<div style="left:53px;top:1258px;width:40px;height:2px;background:#d4d4d4;"></div>
<svg style="left:61px;top:1282px;" width="25" height="21" viewBox="0 0 25 21"><g fill="#6e6e6e"><rect x="0" y="0" width="14" height="8.500"/><rect x="16.500" y="0" width="8" height="8.500"/><rect x="0" y="11.500" width="24.500" height="8.500"/></g></svg>
<div style="left:53px;top:1324px;width:40px;height:2px;background:#d4d4d4;"></div>
<svg style="left:58px;top:1343px;" width="30" height="30" viewBox="0 0 30 30"><path fill="#6e6e6e" d="M19 0.500L29.500 11L25.500 12.500L21 17L20.500 24.500L14 18L1.500 29.500L0.500 28.500L9.500 16.500L5.500 9.500L13 9L17.500 4.500Z"/></svg>
<svg style="left:119px;top:1097px;" width="24" height="27" viewBox="0 0 24 27"><path d="M12 25.500V3M3 12L12 3L21 12" fill="none" stroke="#bdbdbd" stroke-width="3.600"/></svg>
<svg style="left:119px;top:1149px;" width="24" height="27" viewBox="0 0 24 27"><path d="M12 1V23.500M3 14.500L12 23.500L21 14.500" fill="none" stroke="#bdbdbd" stroke-width="3.600"/></svg>
<svg style="left:118px;top:1200px;" width="30" height="30" viewBox="0 0 30 30"><g fill="none" stroke="#6e6e6e" stroke-width="3.600"><path d="M1 4H25"/><path d="M1 13.500H19.500C27 13.500 27 24 19.500 24H15"/><path d="M1 24H7"/></g><path fill="#6e6e6e" d="M10.500 24L18 17.500V30.500Z"/></svg>
<div style="left:109px;top:1244px;width:44px;height:44px;background:#d2d2d2;border-radius:6px;"></div>
<svg style="left:117px;top:1252px;" width="28" height="28" viewBox="0 0 28 28"><g fill="#6e6e6e"><rect x="2" y="5" width="8" height="3.800"/><rect x="2" y="12.300" width="8" height="3.800"/><rect x="2" y="20.300" width="24" height="3.800"/><rect x="17.200" y="0" width="3.800" height="12"/><path d="M11.500 10.500H27.500L19.500 18.500Z"/></g></svg>
<svg style="left:116px;top:1305px;" width="30" height="28" viewBox="0 0 30 28"><g fill="#6e6e6e"><rect x="7" y="0.500" width="16" height="5.500"/><path d="M0.800 9H29.200V18.500H23V17.500H7V18.500H0.800Z"/><path d="M7 17.500H23V27H7ZM9.500 19.500V24.500H20.500V19.500Z" fill-rule="evenodd"/></g><circle cx="26" cy="12" r="1.300" fill="#fff"/></svg>
<svg style="left:121px;top:1356px;" width="21" height="26" viewBox="0 0 21 26"><g fill="#6e6e6e"><path d="M6 0H14.500V1.800H20.500V5.800H0V1.800H6Z"/><path d="M2.200 8H18.300V23C18.300 24.800 17 26 15.300 26H5.200C3.500 26 2.200 24.800 2.200 23Z"/></g></svg>
<span id="t40" style="top:1094.9px;font:400 36.67px/36.67px 'Liberation Mono', monospace;color:#00007f;left:192px;">C:\Users\Hao\PycharmProjects\day02\venv\Scripts\python.exe C:\Users\Hao\PycharmProjects\day02\example01.py</span>
<span id="t41" style="top:1156.9px;font:400 36.67px/36.67px 'Liberation Mono', monospace;color:#000;left:192px;">hello, world</span>
<span id="t42" style="top:1218.9px;font:400 36.67px/36.67px 'Liberation Mono', monospace;color:#000;left:192px;">goodbye, world</span>
<span id="t43" style="top:1342.9px;font:400 36.67px/36.67px 'Liberation Mono', monospace;color:#00007f;left:192px;">Process finished with exit code 0</span>
<span id="t44" style="left:25.5px;top:1238.5px;font:400 23px/23px 'Liberation Sans', sans-serif;color:#000;transform:translate(-50%,-50%) rotate(-90deg);letter-spacing:0.273px;">Bookmarks</span>
<svg style="left:15px;top:1307px;" width="18" height="23" viewBox="0 0 18 23"><path fill="#6e6e6e" d="M0 0H18V23L9 16L0 23Z"/></svg>
<span id="t45" style="left:25.5px;top:1421px;font:400 23px/23px 'Liberation Sans', sans-serif;color:#000;transform:translate(-50%,-50%) rotate(-90deg);letter-spacing:0.519px;">Structure</span>
<svg style="left:15px;top:1481.5px;" width="20" height="20" viewBox="0 0 20 20"><g fill="#6e6e6e"><rect x="10.500" y="0" width="8.500" height="8.500"/><rect x="0" y="11" width="8.500" height="8.500"/><rect x="10.500" y="11" width="8.500" height="8.500"/></g></svg>
<div style="left:3px;top:1526px;width:2676px;height:2px;background:#d1d1d1;"></div>
<div style="left:3px;top:1570px;width:2676px;height:2px;background:#d1d1d1;"></div>
<div style="left:293px;top:1528px;width:112px;height:42px;background:#bdbdbd;"></div>
<svg style="left:72px;top:1538px;" width="18" height="28" viewBox="0 0 18 28"><g fill="none" stroke="#6e6e6e" stroke-width="3"><path d="M5 6V22"/><path d="M14 8C14 14 5 13 5 19"/></g><circle cx="5" cy="4.500" r="3.500" fill="#6e6e6e"/><circle cx="5" cy="23.500" r="3.500" fill="#6e6e6e"/><circle cx="14" cy="6.500" r="3.500" fill="#6e6e6e"/></svg>
<span id="t46" style="top:1540.3px;font:400 23px/23px 'Liberation Sans', sans-serif;color:#000;left:103px;letter-spacing:0.550px;">Version Control</span>
<svg style="left:315px;top:1541px;" width="15.5" height="20" viewBox="0 0 15.5 20"><path fill="#6e6e6e" d="M0 0L15.5 10.0L0 20Z"/></svg>
<span id="t47" style="top:1540.3px;font:400 23px/23px 'Liberation Sans', sans-serif;color:#000;left:345px;letter-spacing:-0.401px;">Run</span>
<svg style="left:431px;top:1539px;" width="26" height="27" viewBox="0 0 26 27"><path fill="#6e6e6e" d="M13 0L26 7L13 14L0 7Z"/><path fill="none" stroke="#6e6e6e" stroke-width="2.600" d="M1 13L13 19.500L25 13M1 19L13 25.500L25 19"/></svg>
<span id="t48" style="top:1540.3px;font:400 23px/23px 'Liberation Sans', sans-serif;color:#000;left:465px;letter-spacing:-0.034px;">Python Packages</span>
<svg style="left:690px;top:1541px;" width="22" height="20" viewBox="0 0 22 20"><g fill="#6e6e6e"><rect x="0" y="0" width="4" height="3.500"/><rect x="7" y="0" width="15" height="3.500"/><rect x="0" y="8" width="4" height="3.500"/><rect x="7" y="8" width="15" height="3.500"/><rect x="0" y="16" width="4" height="3.500"/><rect x="7" y="16" width="15" height="3.500"/></g></svg>
<span id="t49" style="top:1540.3px;font:400 23px/23px 'Liberation Sans', sans-serif;color:#000;left:720px;letter-spacing:0.242px;">TODO</span>
<svg style="left:834px;top:1540px;" width="24" height="24" viewBox="0 0 24 24"><g opacity="1"><path fill="#6e6e6e" d="M14.25.18l.9.2.73.26.59.3.45.32.34.34.25.34.16.33.1.3.04.26.02.2-.01.13V8.5l-.05.63-.13.55-.21.46-.26.38-.3.31-.33.25-.35.19-.35.14-.33.1-.3.07-.26.04-.21.02H8.77l-.69.05-.59.14-.5.22-.41.27-.33.32-.27.35-.2.36-.15.37-.1.35-.07.32-.04.27-.02.21v3.06H3.17l-.21-.03-.28-.07-.32-.12-.35-.18-.36-.26-.36-.36-.35-.46-.32-.59-.28-.73-.21-.88-.14-1.05-.05-1.23.06-1.22.16-1.04.24-.87.32-.71.36-.57.4-.44.42-.33.42-.24.4-.16.36-.1.32-.05.24-.01h.16l.06.01h8.16v-.83H6.18l-.01-2.75-.02-.37.05-.34.11-.31.17-.28.25-.26.31-.23.38-.2.44-.18.51-.15.58-.12.64-.1.71-.06.77-.04.84-.02 1.27.05zM7.95 2.16l-.23.33-.08.41.08.41.23.34.33.22.41.09.41-.09.33-.22.23-.34.08-.41-.08-.41-.23-.33-.33-.22-.41-.09-.41.09z"/><path fill="#6e6e6e" d="M21.04 6.11l.28.06.32.12.35.18.36.27.36.35.35.47.32.59.28.73.21.88.14 1.04.05 1.23-.06 1.23-.16 1.04-.24.86-.32.71-.36.57-.4.45-.42.33-.42.24-.4.16-.36.09-.32.05-.24.02-.16-.01h-8.22v.82h5.84l.01 2.76.02.36-.05.34-.11.31-.17.29-.25.25-.31.24-.38.2-.44.17-.51.15-.58.13-.64.09-.71.07-.77.04-.84.01-1.27-.04-1.07-.14-.9-.2-.73-.25-.59-.3-.45-.33-.34-.34-.25-.34-.16-.33-.1-.3-.04-.25-.02-.2.01-.13v-5.34l.05-.64.13-.54.21-.46.26-.38.3-.32.33-.24.35-.2.35-.14.33-.1.3-.06.26-.04.21-.02.13-.01h5.84l.69-.05.59-.14.5-.21.41-.28.33-.32.27-.35.2-.36.15-.36.1-.35.07-.32.04-.28.02-.21V6.07h2.09l.14.01zM14.57 20.36l-.23.33-.08.41.08.41.23.33.33.23.41.08.41-.08.33-.23.23-.33.08-.41-.08-.41-.23-.33-.33-.23-.41-.08-.41.08z"/></g></svg>
<span id="t50" style="top:1540.3px;font:400 23px/23px 'Liberation Sans', sans-serif;color:#000;left:866px;letter-spacing:0.436px;">Python Console</span>
<svg style="left:1083px;top:1540px;" width="23" height="23" viewBox="0 0 23 23"><circle cx="11.500" cy="11.500" r="11" fill="#6e6e6e"/><rect x="10" y="5" width="3.200" height="8" fill="#f2f2f2"/><rect x="10" y="15" width="3.200" height="3.200" fill="#f2f2f2"/></svg>
<span id="t51" style="top:1540.3px;font:400 23px/23px 'Liberation Sans', sans-serif;color:#000;left:1115px;letter-spacing:0.105px;">Problems</span>
<svg style="left:1256px;top:1541px;" width="24" height="21" viewBox="0 0 24 21"><rect width="24" height="21" fill="#6e6e6e"/><path d="M4 5L9.500 10L4 15" fill="none" stroke="#f2f2f2" stroke-width="2.200"/><rect x="11" y="14.500" width="8" height="2.200" fill="#f2f2f2"/></svg>
<span id="t52" style="top:1540.3px;font:400 23px/23px 'Liberation Sans', sans-serif;color:#000;left:1288px;letter-spacing:0.697px;">Terminal</span>
<svg style="left:1423px;top:1539px;" width="26" height="26" viewBox="0 0 26 26"><path fill="#6e6e6e" d="M7.500 0H18.500L26 13L18.500 26H7.500L0 13Z"/><path fill="#f2f2f2" d="M9.500 6.500L19 13L9.500 19.500Z"/></svg>
<span id="t53" style="top:1540.3px;font:400 23px/23px 'Liberation Sans', sans-serif;color:#000;left:1457px;letter-spacing:-0.525px;">Services</span>
<svg style="left:12px;top:1582px;" width="26" height="24" viewBox="0 0 26 24"><g fill="none" stroke="#6e6e6e" stroke-width="2"><path d="M7 1H25V18H7Z"/><path d="M3 6V22H20"/></g></svg>
<span id="t54" style="top:1578.8px;font:400 25px/25px 'Liberation Sans', sans-serif;color:#000;left:54.699999999999996px;letter-spacing:-0.027px;">Localized</span>
<span id="t55" style="top:1578.8px;font:400 25px/25px 'Liberation Sans', sans-serif;color:#000;left:166.9px;letter-spacing:-0.141px;">PyCharm</span>
<span id="t56" style="top:1578.8px;font:400 25px/25px 'Liberation Sans', sans-serif;color:#000;left:276.5px;letter-spacing:-0.154px;">2022.3.3</span>
<span id="t57" style="top:1578.8px;font:400 25px/25px 'Liberation Sans', sans-serif;color:#000;left:380.1px;letter-spacing:-0.531px;">is</span>
<span id="t58" style="top:1578.8px;font:400 25px/25px 'Liberation Sans', sans-serif;color:#000;left:403.5px;letter-spacing:0.035px;">available</span>
<span id="t59" style="top:1578.8px;font:400 25px/25px 'Liberation Sans', sans-serif;color:#000;left:509.40000000000003px;letter-spacing:2.647px;">//</span>
<span id="t60" style="top:1578.8px;font:400 25px/25px 'Liberation Sans', sans-serif;color:#000;left:536.5999999999999px;letter-spacing:-0.757px;">Switch</span>
<span id="t61" style="top:1578.8px;font:400 25px/25px 'Liberation Sans', sans-serif;color:#000;left:618.3px;letter-spacing:0.794px;">and</span>
<span id="t62" style="top:1578.8px;font:400 25px/25px 'Liberation Sans', sans-serif;color:#000;left:668.5999999999999px;letter-spacing:0.563px;">restart</span>
<span id="t63" style="top:1578.8px;font:400 25px/25px 'Liberation Sans', sans-serif;color:#000;left:748.6999999999999px;letter-spacing:2.897px;">//</span>
<span id="t64" style="top:1578.8px;font:400 25px/25px 'Liberation Sans', sans-serif;color:#000;left:777.0999999999999px;letter-spacing:1.161px;">Don't</span>
<span id="t65" style="top:1578.8px;font:400 25px/25px 'Liberation Sans', sans-serif;color:#000;left:846.1999999999999px;letter-spacing:-0.502px;">ask</span>
<span id="t66" style="top:1578.8px;font:400 25px/25px 'Liberation Sans', sans-serif;color:#000;left:890.5px;letter-spacing:0.226px;">again</span>
<span id="t67" style="top:1578.8px;font:400 25px/25px 'Liberation Sans', sans-serif;color:#000;left:960.8px;letter-spacing:-0.067px;">(6</span>
<span id="t68" style="top:1578.8px;font:400 25px/25px 'Liberation Sans', sans-serif;color:#000;left:990.3px;letter-spacing:0.436px;">minutes</span>
<span id="t69" style="top:1578.8px;font:400 25px/25px 'Liberation Sans', sans-serif;color:#000;left:1087.8px;letter-spacing:0.213px;">ago)</span>
<span id="t70" style="top:1578.8px;font:400 25px/25px 'Liberation Sans', sans-serif;color:#000;left:2023px;letter-spacing:-0.589px;">3:1</span>
<span id="t71" style="top:1578.8px;font:400 25px/25px 'Liberation Sans', sans-serif;color:#000;left:2081px;letter-spacing:-2.074px;">CRLF</span>
<span id="t72" style="top:1578.8px;font:400 25px/25px 'Liberation Sans', sans-serif;color:#000;left:2163px;letter-spacing:-0.366px;">UTF-8</span>
<span id="t73" style="top:1578.8px;font:400 25px/25px 'Liberation Sans', sans-serif;color:#000;left:2256px;letter-spacing:-0.258px;">4 spaces</span>
<span id="t74" style="top:1578.8px;font:400 25px/25px 'Liberation Sans', sans-serif;color:#000;left:2379px;letter-spacing:0.202px;">Python 3.10 (day02)</span>
<svg style="left:2630px;top:1580px;" width="26" height="26" viewBox="0 0 26 26"><path d="M2.400 10V7C2.400 0.900 11.400 0.900 11.400 7V10.500" fill="none" stroke="#6e6e6e" stroke-width="2.800"/><rect x="7.100" y="10.100" width="15.800" height="11.800" fill="#6e6e6e"/></svg>
<div style="left:1675px;top:344px;width:626px;height:896px;background:#f2f2f2;border:2px solid #d7d7d7;"></div>
<span id="t75" style="top:365.3px;font:400 25px/25px 'Liberation Sans', sans-serif;color:#000;left:1741px;letter-spacing:0.440px;">Show Context Actions</span>
<span id="t76" style="top:365.3px;font:400 25px/25px 'Liberation Sans', sans-serif;color:#787878;right:398px;letter-spacing:0.719px;">Alt+Enter</span>
<svg style="left:1705px;top:362px;" width="21" height="29" viewBox="0 0 21 29"><g fill="#6e6e6e"><path d="M10.500 0C16.500 0 20.500 4.500 20.500 9.500C20.500 14 17 16.500 16.500 20H4.500C4 16.500 0.500 14 0.500 9.500C0.500 4.500 4.500 0 10.500 0Z"/><rect x="4.500" y="22" width="12" height="2.400"/><path d="M5.500 26H15.500L14 28.500H7Z"/></g></svg>
<div style="left:1697px;top:406px;width:586px;height:2px;background:#d4d4d4;"></div>
<span id="t77" style="top:425.3px;font:400 25px/25px 'Liberation Sans', sans-serif;color:#000;left:1741px;letter-spacing:-0.591px;"><u>P</u>aste</span>
<span id="t78" style="top:425.3px;font:400 25px/25px 'Liberation Sans', sans-serif;color:#787878;right:398px;letter-spacing:0.641px;">Ctrl+V</span>
<svg style="left:1705px;top:422px;" width="21" height="27" viewBox="0 0 21 27"><path fill="#6e6e6e" fill-rule="evenodd" d="M0 2.500H6V0H15V2.500H21V26.500H0ZM4 8.500V22.500H17V8.500ZM8 2V4.500H13V2Z"/></svg>
<span id="t79" style="top:467.3px;font:400 25px/25px 'Liberation Sans', sans-serif;color:#000;left:1741px;letter-spacing:-0.004px;">Copy / Paste Special</span>
<svg style="left:2267px;top:468.5px;" width="14" height="20" viewBox="0 0 14 20"><path d="M2 2.500L10.500 10L2 17.500" fill="none" stroke="#6e6e6e" stroke-width="2.300"/></svg>
<span id="t80" style="top:509.3px;font:400 25px/25px 'Liberation Sans', sans-serif;color:#000;left:1741px;letter-spacing:0.432px;">Column Selection <u>M</u>ode</span>
<span id="t81" style="top:509.3px;font:400 25px/25px 'Liberation Sans', sans-serif;color:#787878;right:398px;letter-spacing:0.879px;">Alt+Shift+Insert</span>
<div style="left:1697px;top:550px;width:586px;height:2px;background:#d4d4d4;"></div>
<span id="t82" style="top:569.3px;font:400 25px/25px 'Liberation Sans', sans-serif;color:#000;left:1741px;letter-spacing:-0.216px;">Find <u>U</u>sages</span>
<span id="t83" style="top:569.3px;font:400 25px/25px 'Liberation Sans', sans-serif;color:#787878;right:398px;letter-spacing:0.508px;">Alt+F7</span>
<span id="t84" style="top:611.3px;font:400 25px/25px 'Liberation Sans', sans-serif;color:#000;left:1741px;letter-spacing:0.188px;"><u>R</u>efactor</span>
<svg style="left:2267px;top:612.5px;" width="14" height="20" viewBox="0 0 14 20"><path d="M2 2.500L10.500 10L2 17.500" fill="none" stroke="#6e6e6e" stroke-width="2.300"/></svg>
<div style="left:1697px;top:652px;width:586px;height:2px;background:#d4d4d4;"></div>
<span id="t85" style="top:671.3px;font:400 25px/25px 'Liberation Sans', sans-serif;color:#000;left:1741px;letter-spacing:0.357px;">Folding</span>
<svg style="left:2267px;top:672.5px;" width="14" height="20" viewBox="0 0 14 20"><path d="M2 2.500L10.500 10L2 17.500" fill="none" stroke="#6e6e6e" stroke-width="2.300"/></svg>
<div style="left:1697px;top:712px;width:586px;height:2px;background:#d4d4d4;"></div>
<span id="t86" style="top:731.3px;font:400 25px/25px 'Liberation Sans', sans-serif;color:#000;left:1741px;letter-spacing:0.550px;">Go To</span>
<svg style="left:2267px;top:732.5px;" width="14" height="20" viewBox="0 0 14 20"><path d="M2 2.500L10.500 10L2 17.500" fill="none" stroke="#6e6e6e" stroke-width="2.300"/></svg>
<span id="t87" style="top:773.3px;font:400 25px/25px 'Liberation Sans', sans-serif;color:#000;left:1741px;letter-spacing:-0.143px;">Generate...</span>
<span id="t88" style="top:773.3px;font:400 25px/25px 'Liberation Sans', sans-serif;color:#787878;right:398px;letter-spacing:0.869px;">Alt+Insert</span>
<div style="left:1697px;top:814px;width:586px;height:2px;background:#d4d4d4;"></div>
<div style="left:1677px;top:824.5px;width:626px;height:41.5px;background:#3f73b9;"></div>
<span id="t89" style="top:833.3px;font:400 25px/25px 'Liberation Sans', sans-serif;color:#fff;left:1741px;letter-spacing:0.222px;">R<u>u</u>n 'example01'</span>
<span id="t90" style="top:833.3px;font:400 25px/25px 'Liberation Sans', sans-serif;color:#fff;right:398px;letter-spacing:0.629px;">Ctrl+Shift+F10</span>
<svg style="left:1707px;top:833px;" width="20" height="24" viewBox="0 0 20 24"><path fill="#6aaa70" d="M0 0L20 12.0L0 24Z"/></svg>
<span id="t91" style="top:875.3px;font:400 25px/25px 'Liberation Sans', sans-serif;color:#000;left:1741px;letter-spacing:0.383px;"><u>D</u>ebug 'example01'</span>
<svg style="left:1703.5px;top:873.0px;" width="24.0" height="29.0" viewBox="0 0 24 29"><g fill="#6aa76e"><path d="M3.8 14C3.8 8 7.500 5.500 12 5.500S20.200 8 20.200 14V19.500C20.200 25 16.500 28.400 12 28.400S3.800 25 3.800 19.500Z"/>
<path d="M6.200 1.200L11.500 6.500M17.800 1.200L12.500 6.500" stroke="#6aa76e" stroke-width="3.400" fill="none"/>
<rect x="0" y="8.300" width="5" height="3.800"/><rect x="19" y="8.300" width="5" height="3.800"/>
<rect x="0" y="15.200" width="5" height="2.900"/><rect x="19" y="15.200" width="5" height="2.900"/>
<rect x="0" y="21.500" width="5" height="3.500"/><rect x="19" y="21.500" width="5" height="3.500"/></g>
<rect x="8" y="12.300" width="7.800" height="2.700" fill="#f2f2f2"/><rect x="8" y="18.300" width="7.800" height="2.700" fill="#f2f2f2"/></svg>
<span id="t92" style="top:917.3px;font:400 25px/25px 'Liberation Sans', sans-serif;color:#000;left:1741px;letter-spacing:0.484px;">Modify Run Configuration...</span>
<div style="left:1697px;top:958px;width:586px;height:2px;background:#d4d4d4;"></div>
<span id="t93" style="top:977.3px;font:400 25px/25px 'Liberation Sans', sans-serif;color:#000;left:1741px;letter-spacing:0.435px;">Open In</span>
<svg style="left:2267px;top:978.5px;" width="14" height="20" viewBox="0 0 14 20"><path d="M2 2.500L10.500 10L2 17.500" fill="none" stroke="#6e6e6e" stroke-width="2.300"/></svg>
<div style="left:1697px;top:1018px;width:586px;height:2px;background:#d4d4d4;"></div>
<span id="t94" style="top:1037.3px;font:400 25px/25px 'Liberation Sans', sans-serif;color:#000;left:1741px;letter-spacing:0.114px;">Local <u>H</u>istory</span>
<svg style="left:2267px;top:1038.5px;" width="14" height="20" viewBox="0 0 14 20"><path d="M2 2.500L10.500 10L2 17.500" fill="none" stroke="#6e6e6e" stroke-width="2.300"/></svg>
<div style="left:1697px;top:1078px;width:586px;height:2px;background:#d4d4d4;"></div>
<span id="t95" style="top:1097.3px;font:400 25px/25px 'Liberation Sans', sans-serif;color:#000;left:1741px;letter-spacing:0.194px;">Run File in Python Console</span>
<svg style="left:1701px;top:1095px;" width="28" height="28" viewBox="0 0 24 24"><g opacity="1"><path fill="#4f9dd0" d="M14.25.18l.9.2.73.26.59.3.45.32.34.34.25.34.16.33.1.3.04.26.02.2-.01.13V8.5l-.05.63-.13.55-.21.46-.26.38-.3.31-.33.25-.35.19-.35.14-.33.1-.3.07-.26.04-.21.02H8.77l-.69.05-.59.14-.5.22-.41.27-.33.32-.27.35-.2.36-.15.37-.1.35-.07.32-.04.27-.02.21v3.06H3.17l-.21-.03-.28-.07-.32-.12-.35-.18-.36-.26-.36-.36-.35-.46-.32-.59-.28-.73-.21-.88-.14-1.05-.05-1.23.06-1.22.16-1.04.24-.87.32-.71.36-.57.4-.44.42-.33.42-.24.4-.16.36-.1.32-.05.24-.01h.16l.06.01h8.16v-.83H6.18l-.01-2.75-.02-.37.05-.34.11-.31.17-.28.25-.26.31-.23.38-.2.44-.18.51-.15.58-.12.64-.1.71-.06.77-.04.84-.02 1.27.05zM7.95 2.16l-.23.33-.08.41.08.41.23.34.33.22.41.09.41-.09.33-.22.23-.34.08-.41-.08-.41-.23-.33-.33-.22-.41-.09-.41.09z"/><path fill="#f6cf4b" d="M21.04 6.11l.28.06.32.12.35.18.36.27.36.35.35.47.32.59.28.73.21.88.14 1.04.05 1.23-.06 1.23-.16 1.04-.24.86-.32.71-.36.57-.4.45-.42.33-.42.24-.4.16-.36.09-.32.05-.24.02-.16-.01h-8.22v.82h5.84l.01 2.76.02.36-.05.34-.11.31-.17.29-.25.25-.31.24-.38.2-.44.17-.51.15-.58.13-.64.09-.71.07-.77.04-.84.01-1.27-.04-1.07-.14-.9-.2-.73-.25-.59-.3-.45-.33-.34-.34-.25-.34-.16-.33-.1-.3-.04-.25-.02-.2.01-.13v-5.34l.05-.64.13-.54.21-.46.26-.38.3-.32.33-.24.35-.2.35-.14.33-.1.3-.06.26-.04.21-.02.13-.01h5.84l.69-.05.59-.14.5-.21.41-.28.33-.32.27-.35.2-.36.15-.36.1-.35.07-.32.04-.28.02-.21V6.07h2.09l.14.01zM14.57 20.36l-.23.33-.08.41.08.41.23.33.33.23.41.08.41-.08.33-.23.23-.33.08-.41-.08-.41-.23-.33-.33-.23-.41-.08-.41.08z"/></g></svg>
<span id="t96" style="top:1139.3px;font:400 25px/25px 'Liberation Sans', sans-serif;color:#000;left:1741px;letter-spacing:0.400px;">Compare with Clip<u>b</u>oard</span>
<svg style="left:1701px;top:1136px;" width="31" height="31" viewBox="0 0 31 31"><path fill="#6e6e6e" fill-rule="evenodd" d="M0 2.500H6V0H15V2.500H20V8H4V26H0ZM8 2V4.500H13V2Z"/><g fill="#4a9bd4"><path d="M16 14.500L24 6.500V12.500H30V16.500H24V22.500Z"/><path d="M20 22.500L12 14.500V20.500H6V24.500H12V30.500Z"/></g></svg>
<div style="left:1697px;top:1180px;width:586px;height:2px;background:#d4d4d4;"></div>
<span id="t97" style="top:1199.3px;font:400 25px/25px 'Liberation Sans', sans-serif;color:#000;left:1741px;letter-spacing:-0.162px;">Create Gist...</span>
<svg style="left:1701px;top:1197px;" width="28" height="28" viewBox="0 0 24 24.6"><path fill="#1b1b1b" d="M12 .297c-6.63 0-12 5.373-12 12 0 5.303 3.438 9.8 8.205 11.385.6.113.82-.258.82-.577 0-.285-.01-1.04-.015-2.04-3.338.724-4.042-1.61-4.042-1.61C4.422 18.07 3.633 17.7 3.633 17.7c-1.087-.744.084-.729.084-.729 1.205.084 1.838 1.236 1.838 1.236 1.07 1.835 2.809 1.305 3.495.998.108-.776.417-1.305.76-1.605-2.665-.3-5.466-1.332-5.466-5.93 0-1.31.465-2.38 1.235-3.22-.135-.303-.54-1.523.105-3.176 0 0 1.005-.322 3.3 1.23.96-.267 1.98-.399 3-.405 1.02.006 2.04.138 3 .405 2.28-1.552 3.285-1.23 3.285-1.23.645 1.653.24 2.873.12 3.176.765.84 1.23 1.91 1.23 3.22 0 4.61-2.805 5.625-5.475 5.92.42.36.81 1.096.81 2.22 0 1.606-.015 2.896-.015 3.286 0 .315.21.69.825.57C20.565 22.092 24 17.592 24 12.297c0-6.627-5.373-12-12-12"/></svg>
<div style="left:420px;top:1610.6px;width:1595px;height:1.4px;background:#27325f;"></div>
<div style="left:-1.5px;top:114px;width:649.1px;height:866.0px;border:6.2px solid #ec5f6a;border-radius:11px;"></div>
<div style="left:664.4px;top:114.8px;width:1970.1px;height:865.0000000000001px;border:6.2px solid #ec5f6a;border-radius:11px;"></div>
<div style="left:0px;top:1013.6px;width:2634.6px;height:555.7px;border:6.2px solid #ec5f6a;border-radius:11px;"></div>
<div style="left:1657px;top:814.2px;width:659.1999999999999px;height:54.399999999999956px;border:6.2px solid #ec5f6a;border-radius:12px;"></div>
<div style="left:279.2px;top:1517px;width:121.20000000000002px;height:55.6px;border:6.2px solid #ec5f6a;border-radius:11px;"></div>
<span style="left:479px;top:922.9px;font:400 36.5px/36.5px 'Liberation Sans', 'Noto Sans CJK SC', sans-serif;color:#ec5f6a;">项目窗口</span>
<span style="left:2468px;top:924.9px;font:400 36.5px/36.5px 'Liberation Sans', 'Noto Sans CJK SC', sans-serif;color:#ec5f6a;">代码窗口</span>
<span style="left:2469px;top:1482.9px;font:400 36.5px/36.5px 'Liberation Sans', 'Noto Sans CJK SC', sans-serif;color:#ec5f6a;">结果窗口</span>
<span style="left:590px;top:1189.4px;font:400 36.5px/36.5px 'Liberation Sans', 'Noto Sans CJK SC', sans-serif;color:#ec5f6a;">运行结果</span>
<span style="left:1476px;top:830.9px;font:400 36.5px/36.5px 'Liberation Sans', 'Noto Sans CJK SC', sans-serif;color:#ec5f6a;">运行文件</span>
<span style="left:1380px;top:351.4px;font:400 36.5px/36.5px 'Liberation Sans', 'Noto Sans CJK SC', sans-serif;color:#ec5f6a;">右键菜单</span>
<svg style="left:1540px;top:354px;" width="116" height="28" viewBox="0 0 116 28"><path fill="#e83223" d="M3 11.500C1.500 11.500 0.800 12.500 0.800 14S1.500 16.500 3 16.500L96 19.500L93.500 26.500L115 13.500L93.500 1L96 8.500Z"/></svg>
</div></body></html>
